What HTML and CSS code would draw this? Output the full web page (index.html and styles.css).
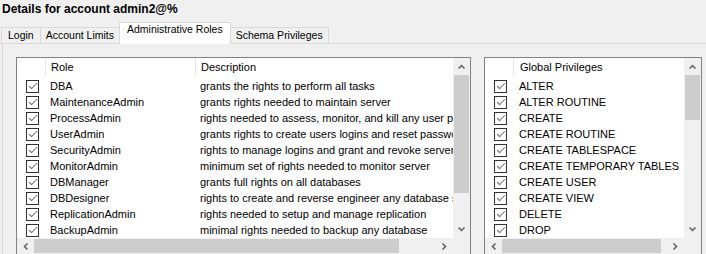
FILE: index.html
```html
<!DOCTYPE html>
<html lang="en">
<head>
    <meta charset="UTF-8">
    <title>Account Details</title>
    <link rel="stylesheet" href="styles.css">
</head>
<body>
    <h1 class="title">Details for account admin2@%</h1>

    <div class="tabs">
        <div class="tab">Login</div>
        <div class="tab">Account Limits</div>
        <div class="tab active">Administrative Roles</div>
        <div class="tab">Schema Privileges</div>
    </div>

    <div class="page">
        <!-- Roles list -->
        <div class="list roles">
            <div class="list-body">
                <div class="row head">
                    <div class="cell cb-col"></div>
                    <div class="cell role-col sep">Role</div>
                    <div class="cell desc-col sep">Description</div>
                </div>
                <div class="row"><div class="cell cb-col"><span class="cb"></span></div><div class="cell role-col">DBA</div><div class="cell desc-col">grants the rights to perform all tasks</div></div>
                <div class="row"><div class="cell cb-col"><span class="cb"></span></div><div class="cell role-col">MaintenanceAdmin</div><div class="cell desc-col">grants rights needed to maintain server</div></div>
                <div class="row"><div class="cell cb-col"><span class="cb"></span></div><div class="cell role-col">ProcessAdmin</div><div class="cell desc-col">rights needed to assess, monitor, and kill any user processes running in server</div></div>
                <div class="row"><div class="cell cb-col"><span class="cb"></span></div><div class="cell role-col">UserAdmin</div><div class="cell desc-col">grants rights to create users logins and reset passwords</div></div>
                <div class="row"><div class="cell cb-col"><span class="cb"></span></div><div class="cell role-col">SecurityAdmin</div><div class="cell desc-col">rights to manage logins and grant and revoke server and database level permission</div></div>
                <div class="row"><div class="cell cb-col"><span class="cb"></span></div><div class="cell role-col">MonitorAdmin</div><div class="cell desc-col">minimum set of rights needed to monitor server</div></div>
                <div class="row"><div class="cell cb-col"><span class="cb"></span></div><div class="cell role-col">DBManager</div><div class="cell desc-col">grants full rights on all databases</div></div>
                <div class="row"><div class="cell cb-col"><span class="cb"></span></div><div class="cell role-col">DBDesigner</div><div class="cell desc-col">rights to create and reverse engineer any database schema</div></div>
                <div class="row"><div class="cell cb-col"><span class="cb"></span></div><div class="cell role-col">ReplicationAdmin</div><div class="cell desc-col">rights needed to setup and manage replication</div></div>
                <div class="row"><div class="cell cb-col"><span class="cb"></span></div><div class="cell role-col">BackupAdmin</div><div class="cell desc-col">minimal rights needed to backup any database</div></div>
            </div>
            <div class="vbar">
                <div class="arrow"><svg width="7" height="5"><polyline points="0.5,4.5 3.5,1.5 6.5,4.5" fill="none" stroke="#606060" stroke-width="1.5"/></svg></div>
                <div class="thumb roles-thumb"></div>
                <div class="track"></div>
                <div class="arrow"><svg width="7" height="5"><polyline points="0.5,0.5 3.5,3.5 6.5,0.5" fill="none" stroke="#606060" stroke-width="1.5"/></svg></div>
            </div>
            <div class="hbar">
                <div class="arrow"><svg width="5" height="7"><polyline points="4.5,0.5 1.5,3.5 4.5,6.5" fill="none" stroke="#606060" stroke-width="1.5"/></svg></div>
                <div class="thumb roles-hthumb"></div>
                <div class="track"></div>
                <div class="arrow"><svg width="5" height="7"><polyline points="0.5,0.5 3.5,3.5 0.5,6.5" fill="none" stroke="#606060" stroke-width="1.5"/></svg></div>
            </div>
            <div class="corner"></div>
        </div>

        <!-- Global privileges list -->
        <div class="list privs">
            <div class="list-body">
                <div class="row head">
                    <div class="cell cb-col"></div>
                    <div class="cell priv-col sep">Global Privileges</div>
                </div>
                <div class="row"><div class="cell cb-col"><span class="cb"></span></div><div class="cell priv-col">ALTER</div></div>
                <div class="row"><div class="cell cb-col"><span class="cb"></span></div><div class="cell priv-col">ALTER ROUTINE</div></div>
                <div class="row"><div class="cell cb-col"><span class="cb"></span></div><div class="cell priv-col">CREATE</div></div>
                <div class="row"><div class="cell cb-col"><span class="cb"></span></div><div class="cell priv-col">CREATE ROUTINE</div></div>
                <div class="row"><div class="cell cb-col"><span class="cb"></span></div><div class="cell priv-col">CREATE TABLESPACE</div></div>
                <div class="row"><div class="cell cb-col"><span class="cb"></span></div><div class="cell priv-col">CREATE TEMPORARY TABLES</div></div>
                <div class="row"><div class="cell cb-col"><span class="cb"></span></div><div class="cell priv-col">CREATE USER</div></div>
                <div class="row"><div class="cell cb-col"><span class="cb"></span></div><div class="cell priv-col">CREATE VIEW</div></div>
                <div class="row"><div class="cell cb-col"><span class="cb"></span></div><div class="cell priv-col">DELETE</div></div>
                <div class="row"><div class="cell cb-col"><span class="cb"></span></div><div class="cell priv-col">DROP</div></div>
            </div>
            <div class="vbar">
                <div class="arrow"><svg width="7" height="5"><polyline points="0.5,4.5 3.5,1.5 6.5,4.5" fill="none" stroke="#606060" stroke-width="1.5"/></svg></div>
                <div class="thumb privs-thumb"></div>
                <div class="track"></div>
                <div class="arrow"><svg width="7" height="5"><polyline points="0.5,0.5 3.5,3.5 6.5,0.5" fill="none" stroke="#606060" stroke-width="1.5"/></svg></div>
            </div>
            <div class="hbar">
                <div class="arrow"><svg width="5" height="7"><polyline points="4.5,0.5 1.5,3.5 4.5,6.5" fill="none" stroke="#606060" stroke-width="1.5"/></svg></div>
                <div class="thumb privs-hthumb"></div>
                <div class="track"></div>
                <div class="arrow"><svg width="5" height="7"><polyline points="0.5,0.5 3.5,3.5 0.5,6.5" fill="none" stroke="#606060" stroke-width="1.5"/></svg></div>
            </div>
            <div class="corner"></div>
        </div>
    </div>
</body>
</html>
```

FILE: styles.css
```css
body {
    font-family: "Liberation Sans", Arial, sans-serif;
    font-size: 11px;
    background-color: #f0f0f0;
    color: #000;
    margin: 0;
    padding: 0;
    height: 254px;
    overflow: hidden;
}

.title {
    font-size: 12px;
    font-weight: bold;
    line-height: 14px;
    height: 19px;
    margin: 0;
    padding: 2px 0 0 2px;
}

/* tab strip */
.tabs {
    display: flex;
    align-items: flex-end;
    height: 22px;
    padding-left: 1px;
    border-bottom: 1px solid #d9d9d9;
    font-size: 10.5px;
}

.tab {
    height: 15px;
    line-height: 15px;
    padding: 0 5px;
    border: 1px solid #d9d9d9;
    border-bottom: none;
    margin-left: -1px;
    background-color: #f0f0f0;
}

.tab:first-child {
    margin-left: 0;
    padding: 0 6px;
}

.tab.active {
    height: 21px;
    line-height: 13px;
    padding: 0 7px;
    margin-bottom: -1px;
    background-color: #fff;
    position: relative;
}

/* tab page */
.page {
    display: flex;
    gap: 13px;
    margin-left: 2px;
    padding: 13px 0 0 13px;
    border-left: 1px solid #d9d9d9;
}

.list {
    display: grid;
    grid-template-columns: 1fr 17px;
    grid-template-rows: 180px 16px;
    border: 1px solid #828282;
    background-color: #fff;
}

.roles {
    width: 453px;
}

.privs {
    width: 216px;
}

.list-body {
    overflow: hidden;
}

.row {
    display: flex;
    height: 16px;
    align-items: center;
    white-space: nowrap;
}

.row.head {
    height: 20px;
}

.cell {
    overflow: hidden;
}

.head .cell {
    height: 18px;
    line-height: 18px;
    margin-top: -2px;
}

.sep {
    border-left: 1px solid #e5e5e5;
}

.cb-col {
    width: 28px;
    padding-left: 9px;
    box-sizing: border-box;
    display: flex;
    align-items: center;
}

.role-col {
    width: 150px;
    padding-left: 5px;
    box-sizing: border-box;
}

.desc-col {
    flex: 1;
    padding-left: 5px;
}

.priv-col {
    flex: 1;
    padding-left: 6px;
}

.cb {
    width: 13px;
    height: 13px;
    box-sizing: border-box;
    border: 1px solid #333;
    position: relative;
}

.cb::after {
    content: "";
    position: absolute;
    left: 3.5px;
    top: 0px;
    width: 3px;
    height: 7px;
    border: solid #6d6d6d;
    border-width: 0 1px 1px 0;
    transform: rotate(45deg);
}

/* scrollbars */
.vbar {
    display: flex;
    flex-direction: column;
    background-color: #f0f0f0;
}

.hbar {
    display: flex;
    background-color: #f0f0f0;
}

.arrow {
    flex: 0 0 17px;
    display: flex;
    align-items: center;
    justify-content: center;
}

.vbar .thumb {
    margin: 0 1px;
    background-color: #cdcdcd;
}

.hbar .thumb {
    margin: 1px 0;
    background-color: #cdcdcd;
}

.track {
    flex: 1;
}

.roles-thumb {
    height: 118px;
}

.privs-thumb {
    height: 45px;
}

.roles-hthumb {
    width: 365px;
}

.privs-hthumb {
    width: 159px;
}

.corner {
    background-color: #f0f0f0;
}
```
